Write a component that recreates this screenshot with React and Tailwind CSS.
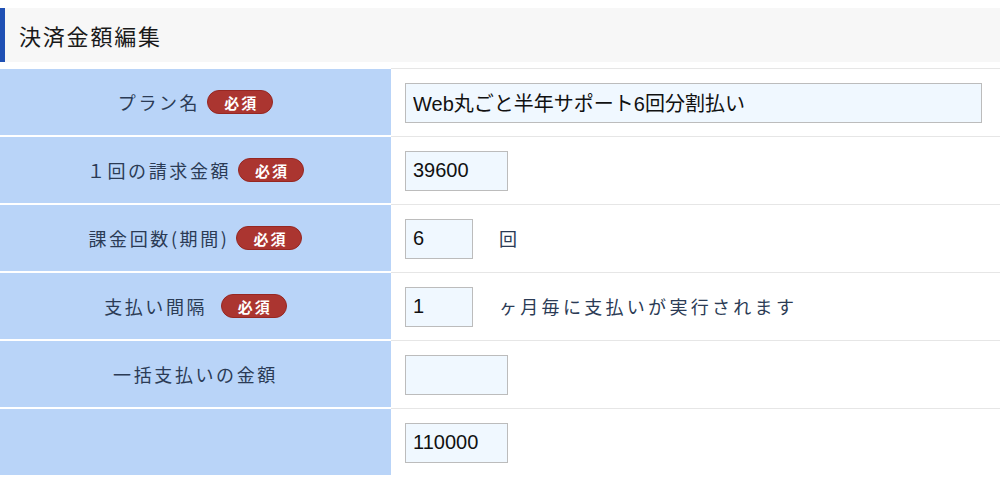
import React from "react";

const Badge = () => (
  <span className="ml-[7px] inline-flex h-[24px] w-[66px] items-center justify-center rounded-full border border-[#962722] bg-[#ab3530] pl-[2px] text-[15px] font-bold leading-none tracking-[2px] text-white">
    必須
  </span>
);

const Row = ({ label, required, children }) => (
  <div className="flex h-[68px]">
    <div className="flex w-[391px] shrink-0 items-center justify-center border-y border-white bg-[#b9d4f8] text-[18px] tracking-[2.6px] text-[#2b3b55]">
      <span className="whitespace-pre">{label}</span>
      {required && <Badge />}
    </div>
    <div className="flex flex-1 items-center border-t border-[#e6e6e6] pl-[14px]">
      {children}
    </div>
  </div>
);

const Input = ({ w, value }) => (
  <input
    readOnly
    value={value}
    className={`h-[40px] ${w} border border-[#bcbcbc] bg-[#f0f8ff] px-[7px] text-[20px] text-[#111] outline-none`}
    style={{ fontFamily: '"Liberation Sans", "Noto Sans CJK JP", sans-serif' }}
  />
);

export default function App() {
  return (
    <div
      className="h-[477px] w-[1000px] overflow-hidden bg-white pt-[8px]"
      style={{ fontFamily: '"Noto Sans CJK JP", "Noto Sans", sans-serif' }}
    >
      <div className="flex h-[54px] items-center border-l-[5px] border-[#1f50b4] bg-[#f7f7f7] pl-[14px] text-[22px] tracking-[1.8px] text-[#1a1a1a]">
        決済金額編集
      </div>
      <div className="mt-[6px]">
        <Row label="プラン名" required>
          <Input w="w-[577px]" value="Web丸ごと半年サポート6回分割払い" />
        </Row>
        <Row label="１回の請求金額" required>
          <Input w="w-[103px]" value="39600" />
        </Row>
        <Row label="課金回数(期間)" required>
          <Input w="w-[68px]" value="6" />
          <span className="ml-[26px] text-[18px] tracking-[3.3px] text-[#2b3b55]">回</span>
        </Row>
        <Row label="支払い間隔 " required>
          <Input w="w-[68px]" value="1" />
          <span className="ml-[26px] text-[18px] tracking-[3.3px] text-[#2b3b55]">ヶ月毎に支払いが実行されます</span>
        </Row>
        <Row label="一括支払いの金額">
          <Input w="w-[103px]" value="" />
        </Row>
        <Row label="">
          <Input w="w-[103px]" value="110000" />
        </Row>
      </div>
    </div>
  );
}
